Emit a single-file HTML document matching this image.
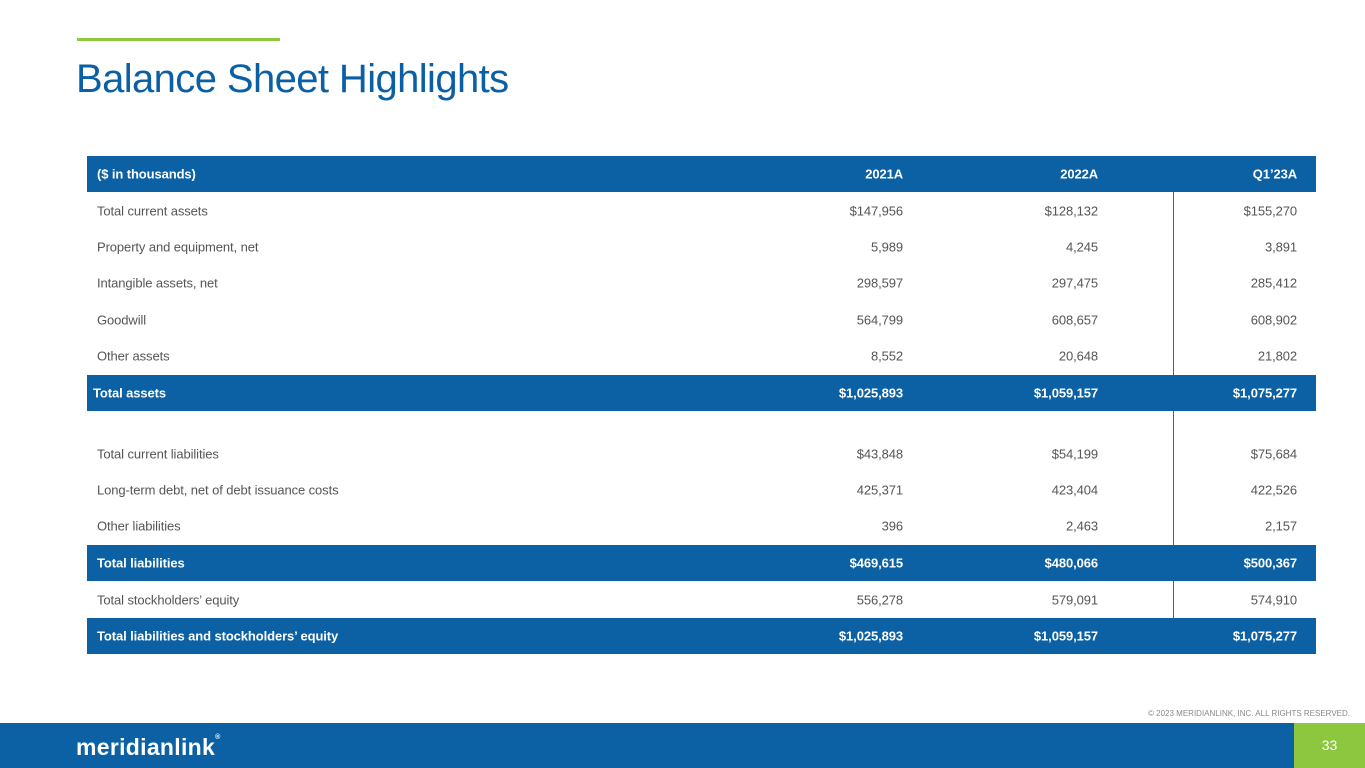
<!DOCTYPE html>
<html><head><style>
body{margin:0;width:1365px;height:768px;position:relative;background:#fff;font-family:"Liberation Sans",sans-serif;overflow:hidden}
.bar{position:absolute;left:77px;top:38px;width:203px;height:3px;background:#8dc63f}
h1{position:absolute;left:76px;top:57px;margin:0;font-weight:normal;font-size:40px;color:#0a5fa5;letter-spacing:-0.6px;white-space:nowrap}
.row{position:absolute;left:87px;width:1229px;height:36px;font-size:13px;color:#555;letter-spacing:-0.1px}
.row span{position:absolute;top:50%;transform:translateY(-50%);white-space:nowrap}
.row .l{left:10px}
.c1{right:413px}.c2{right:218px}.c3{right:19px}
.b{background:#0b61a4;color:#fff;font-weight:bold}
.v{position:absolute;left:1173px;width:1px;background:#2a6aa8}
.foot{position:absolute;left:0;top:723px;width:1365px;height:45px;background:#0b61a4}
.green{position:absolute;left:1294px;top:723px;width:71px;height:45px;background:#8dc63f;color:#fff;font-size:14px;text-align:center;line-height:45px}
.copy{position:absolute;right:15px;top:709px;font-size:8px;color:#888}
.logo{position:absolute;left:76px;top:734px;color:#fff;font-size:23px;font-weight:bold;letter-spacing:0.3px}
</style></head><body>
<div class="bar"></div>
<h1>Balance Sheet Highlights</h1>
<div class="row b" style="top:156px"><span class="l">($ in thousands)</span><span class="c1">2021A</span><span class="c2">2022A</span><span class="c3">Q1’23A</span></div>
<div class="row" style="top:193px"><span class="l">Total current assets</span><span class="c1">$147,956</span><span class="c2">$128,132</span><span class="c3">$155,270</span></div>
<div class="row" style="top:229px"><span class="l">Property and equipment, net</span><span class="c1">5,989</span><span class="c2">4,245</span><span class="c3">3,891</span></div>
<div class="row" style="top:265px"><span class="l">Intangible assets, net</span><span class="c1">298,597</span><span class="c2">297,475</span><span class="c3">285,412</span></div>
<div class="row" style="top:302px"><span class="l">Goodwill</span><span class="c1">564,799</span><span class="c2">608,657</span><span class="c3">608,902</span></div>
<div class="row" style="top:338px"><span class="l">Other assets</span><span class="c1">8,552</span><span class="c2">20,648</span><span class="c3">21,802</span></div>
<div class="row b" style="top:375px"><span class="l" style="left:6px">Total assets</span><span class="c1">$1,025,893</span><span class="c2">$1,059,157</span><span class="c3">$1,075,277</span></div>
<div class="row" style="top:436px"><span class="l">Total current liabilities</span><span class="c1">$43,848</span><span class="c2">$54,199</span><span class="c3">$75,684</span></div>
<div class="row" style="top:472px"><span class="l">Long-term debt, net of debt issuance costs</span><span class="c1">425,371</span><span class="c2">423,404</span><span class="c3">422,526</span></div>
<div class="row" style="top:508px"><span class="l">Other liabilities</span><span class="c1">396</span><span class="c2">2,463</span><span class="c3">2,157</span></div>
<div class="row b" style="top:545px"><span class="l">Total liabilities</span><span class="c1">$469,615</span><span class="c2">$480,066</span><span class="c3">$500,367</span></div>
<div class="row" style="top:582px"><span class="l">Total stockholders’ equity</span><span class="c1">556,278</span><span class="c2">579,091</span><span class="c3">574,910</span></div>
<div class="row b" style="top:618px"><span class="l">Total liabilities and stockholders’ equity</span><span class="c1">$1,025,893</span><span class="c2">$1,059,157</span><span class="c3">$1,075,277</span></div>
<div class="v" style="top:192px;height:183px"></div>
<div class="v" style="top:411px;height:134px"></div>
<div class="v" style="top:581px;height:37px"></div>
<div class="copy">© 2023 MERIDIANLINK, INC. ALL RIGHTS RESERVED.</div>
<div class="foot"></div>
<div class="logo">meridianlink<span style="font-size:7px;vertical-align:top">®</span></div>
<div class="green">33</div>
</body></html>
